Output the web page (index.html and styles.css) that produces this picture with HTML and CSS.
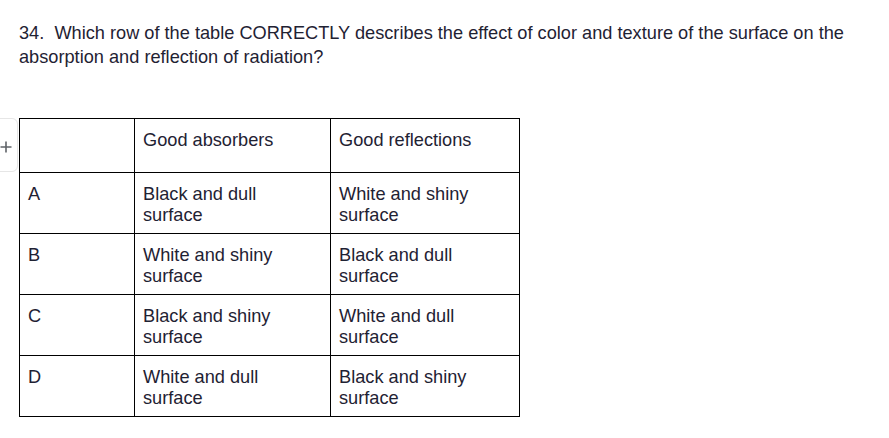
FILE: index.html
```html
<!DOCTYPE html>
<html>
<head>
<meta charset="utf-8">
<link rel="stylesheet" href="styles.css">
</head>
<body>
<div class="page">
  <p class="question">34.&nbsp; Which row of the table CORRECTLY describes the effect of color and texture of the surface on the absorption and reflection of radiation?</p>
  <div class="table-wrap">
    <div class="add-btn">
      <svg class="plus" width="12" height="12" viewBox="0 0 12 12"><path d="M6 0.5V11.5M0.5 6H11.5" stroke="#5f6368" stroke-width="1.6" fill="none"/></svg>
    </div>
    <table class="grid">
      <colgroup><col class="c1"><col class="c2"><col class="c3"></colgroup>
      <tr class="head"><td></td><td>Good absorbers</td><td>Good reflections</td></tr>
      <tr><td>A</td><td>Black and dull<br>surface</td><td>White and shiny<br>surface</td></tr>
      <tr><td>B</td><td>White and shiny<br>surface</td><td>Black and dull<br>surface</td></tr>
      <tr><td>C</td><td>Black and shiny<br>surface</td><td>White and dull<br>surface</td></tr>
      <tr><td>D</td><td>White and dull<br>surface</td><td>Black and shiny<br>surface</td></tr>
    </table>
  </div>
</div>
</body>
</html>
```
FILE: styles.css
```css
html, body { margin: 0; padding: 0; background: #fff; }
body { font-family: "Liberation Sans", Arial, sans-serif; color: #1f2233; }
.page { padding: 21px 20px 0 19px; }
.question { margin: 0; font-size: 18.2px; line-height: 24px; }
.table-wrap { position: relative; margin-top: 49px; }
.add-btn {
  position: absolute; left: -40px; top: 0; width: 39px; height: 54px;
  border: 1px solid #e6e6e6; border-radius: 6px; box-sizing: border-box;
  background: #fff;
}
.plus { position: absolute; left: 20px; top: 22px; }
.grid { border-collapse: collapse; font-size: 18.2px; line-height: 21px; }
.grid td { border: 1px solid #000; padding: 11px 8px 7px 8px; vertical-align: top; }
.c1 { width: 115px; }
.c2 { width: 196px; }
.c3 { width: 189px; }
.grid tr.head td { height: 35px; }
.grid tr td { height: 42px; }
```
